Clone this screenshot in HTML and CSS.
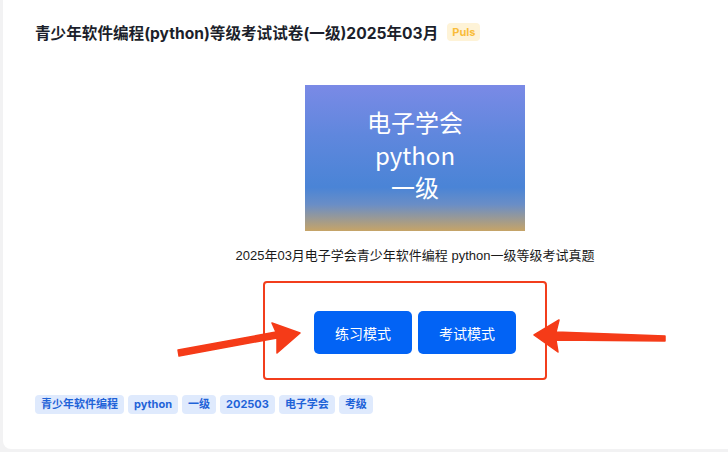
FILE: index.html
```html
<!DOCTYPE html>
<html lang="zh-CN">
<head>
<meta charset="utf-8">
<link rel="stylesheet" href="styles.css">
</head>
<body>
<div class="card">
  <div class="title-row">
    <h1 class="title">青少年软件编程(python)等级考试试卷(一级)2025年03月</h1>
    <span class="badge">Puls</span>
  </div>
  <div class="cover-wrap">
    <div class="cover">
      <div class="cover-line">电子学会</div>
      <div class="cover-line">python</div>
      <div class="cover-line">一级</div>
    </div>
  </div>
  <p class="caption">2025年03月电子学会青少年软件编程 python一级等级考试真题</p>
  <div class="actions-wrap">
    <div class="actions">
      <button class="btn">练习模式</button>
      <button class="btn">考试模式</button>
    </div>
  </div>
  <div class="tags">
    <span class="tag">青少年软件编程</span>
    <span class="tag">python</span>
    <span class="tag">一级</span>
    <span class="tag">202503</span>
    <span class="tag">电子学会</span>
    <span class="tag">考级</span>
  </div>
  <svg class="arrows" width="728" height="452" viewBox="0 0 728 452">
    <path d="M178 350 L276 332 L272 323 L300 333 L277 353 L277 338 L179 356 Z" fill="#f53b18" stroke="#f53b18" stroke-width="1.5" stroke-linejoin="round"/>
    <path d="M665 336 L556 332 L559 320 L534 335 L558 352 L556 340 L665 341 Z" fill="#f53b18" stroke="#f53b18" stroke-width="1.5" stroke-linejoin="round"/>
  </svg>
</div>
</body>
</html>
```
FILE: styles.css
```css
* { box-sizing: border-box; }
html, body { margin: 0; padding: 0; }
body {
  background: #f2f2f3;
  font-family: "Inter", "Noto Sans CJK SC", sans-serif;
  width: 728px;
  height: 452px;
  overflow: hidden;
}
.card {
  position: relative;
  margin-left: 3px;
  width: 725px;
  height: 449px;
  background: #fff;
  border-bottom-left-radius: 8px;
  padding: 22px 0 0 32px;
}
.title-row {
  display: flex;
  align-items: center;
  gap: 9px;
  height: 20px;
}
.title {
  margin: 0;
  font-size: 15.6px;
  font-weight: 700;
  color: #1c1f2b;
  white-space: nowrap;
}
.badge {
  background: #fef3d7;
  color: #f9bd3a;
  font-size: 11px;
  font-weight: 700;
  padding: 2px 5px;
  border-radius: 4px;
  line-height: 14px;
}
.cover-wrap {
  display: flex;
  justify-content: center;
  margin-top: 43px;
  padding-left: 67px;
}
.cover {
  width: 220px;
  height: 146px;
  background: linear-gradient(180deg, #7a8ae6 0%, #5f87dd 35%, #4a84d6 70%, #6a8ec6 82%, #c6a467 100%);
  display: flex;
  flex-direction: column;
  align-items: center;
  justify-content: center;
  color: #fff;
  font-family: "Noto Sans CJK SC", sans-serif;
  font-size: 24px;
  padding-bottom: 6px;
}
.cover-line {
  height: 32.5px;
  line-height: 32.5px;
}
.caption {
  margin: 15px 0 0;
  padding-left: 67px;
  text-align: center;
  font-family: "Liberation Sans", "Noto Sans CJK SC", sans-serif;
  font-size: 13px;
  color: #1a1a1a;
  line-height: 20px;
}
.actions-wrap {
  display: flex;
  justify-content: center;
  margin-top: 15px;
  padding-left: 47px;
}
.actions {
  width: 284px;
  height: 99px;
  border: 2px solid #f23e1c;
  border-radius: 4px;
  display: flex;
  justify-content: center;
  align-items: center;
  gap: 6px;
  padding-top: 4px;
  padding-left: 20px;
}
.btn {
  width: 98px;
  height: 43px;
  border: 0;
  border-radius: 5px;
  background: #0263f5;
  color: #fff;
  font-family: "Noto Sans CJK SC", sans-serif;
  font-size: 14px;
  padding: 0;
}
.tags {
  display: flex;
  gap: 4px;
  margin-top: 15px;
}
.tag {
  background: #dfeafd;
  color: #1f63d8;
  font-size: 11px;
  font-weight: 700;
  line-height: 19px;
  height: 19px;
  padding: 0 6px;
  border-radius: 4px;
}
.arrows {
  position: absolute;
  left: -3px;
  top: 0;
  pointer-events: none;
}
```
